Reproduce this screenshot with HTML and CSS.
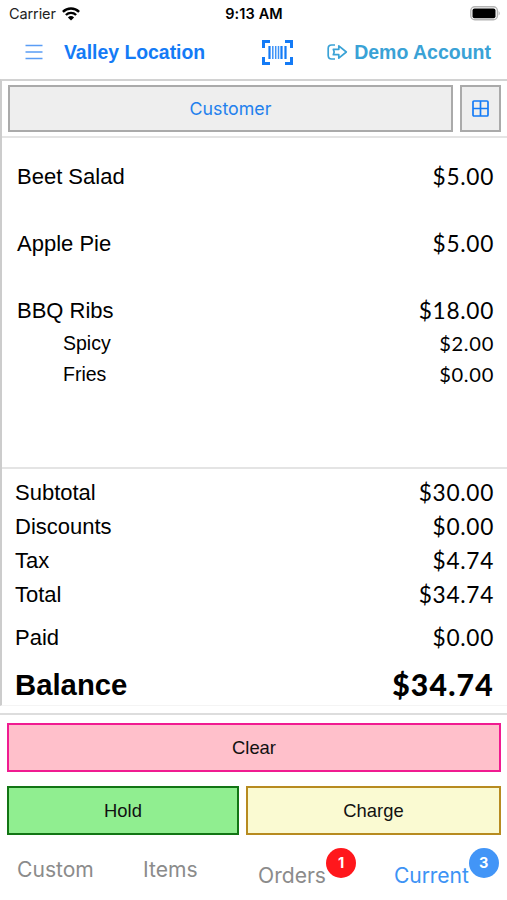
FILE: index.html
```html
<!DOCTYPE html>
<html lang="en">
<head>
<meta charset="utf-8">
<meta name="viewport" content="width=device-width">
<title>Current order</title>
<link rel="stylesheet" href="styles.css">
</head>
<body>
<div class="status">
  <div class="carrier">Carrier
    <svg width="18" height="14" viewBox="0 0 18 14"><g fill="none" stroke="#000" stroke-width="2.4"><path d="M.9 4.8a11.6 11.6 0 0 1 16.2 0"/><path d="M3.9 8a7.3 7.3 0 0 1 10.2 0"/></g><path d="M5.9 10.4a4.5 4.5 0 0 1 6.2 0L9 13.6z"/></svg>
  </div>
  <div class="clock">9:13 AM</div>
  <svg class="battery" width="31" height="15" viewBox="0 0 31 15"><rect x=".8" y=".8" width="26.6" height="13" rx="4" fill="#fff" stroke="#b4b4b4" stroke-width="1.4"/><rect x="2.5" y="2.5" width="23" height="9.7" rx="2"/><path d="M28.7 5q2 2.3 0 4.6z" fill="#aaa"/></svg>
</div>
<header class="header">
  <svg class="menu" width="18" height="16" viewBox="0 0 18 16"><path d="M.5 1.5h17M.5 8h17M.5 14.5h17" stroke="#5a9df5" stroke-width="1.7"/></svg>
  <div class="location">Valley Location</div>
  <svg class="barcode" width="31" height="25" viewBox="0 0 31 25"><path d="M1.5 8V1.5H8M23 1.5h6.5V8M29.5 17v6.5H23M8 23.5H1.5V17" fill="none" stroke="#147bf6" stroke-width="3"/><path d="M7.5 6v13M23.5 6v13M19.5 6v13" stroke="#147bf6" stroke-width="2.2"/><path d="M10.8 6v13M13.7 6v13M16.5 6v13" stroke="#3d93f8" stroke-width="1.5"/></svg>
  <div class="account">
    <svg width="21" height="16" viewBox="0 0 21 16"><path d="M8 1H4.6Q1.2 1 1.2 4.4v7.2Q1.2 15 4.6 15H8M6.3 5.3h5.500V1.8L19.3 8l-7.500 6.2v-3.500H6.3L7.2 8z" fill="none" stroke="#3aa2d6" stroke-width="1.7" stroke-linejoin="round"/></svg>
    <span>Demo Account</span>
  </div>
</header>
<main class="ticket">
  <div class="toolbar">
    <button class="customer">Customer</button>
    <button class="grid-button" aria-label="Tables"><svg width="17" height="17" viewBox="0 0 17 17"><path d="M8.5 1v15M1 8.5h15M2 1h13q1 0 1 1v13q0 1-1 1H2q-1 0-1-1V2q0-1 1-1z" fill="none" stroke="#147bf6" stroke-width="1.7"/></svg></button>
  </div>
  <section class="items">
    <div class="item"><span>Beet Salad</span><span class="price">$5.00</span></div>
    <div class="item"><span>Apple Pie</span><span class="price">$5.00</span></div>
    <div class="item"><span>BBQ Ribs</span><span class="price">$18.00</span></div>
    <div class="modifier"><span>Spicy</span><span class="price">$2.00</span></div>
    <div class="modifier"><span>Fries</span><span class="price">$0.00</span></div>
  </section>
  <section class="totals">
    <div class="total"><span>Subtotal</span><span class="price">$30.00</span></div>
    <div class="total"><span>Discounts</span><span class="price">$0.00</span></div>
    <div class="total"><span>Tax</span><span class="price">$4.74</span></div>
    <div class="total"><span>Total</span><span class="price">$34.74</span></div>
    <div class="total paid"><span>Paid</span><span class="price">$0.00</span></div>
    <div class="balance"><span>Balance</span><span class="price">$34.74</span></div>
  </section>
</main>
<section class="actions">
  <button class="action clear">Clear</button>
  <button class="action hold">Hold</button>
  <button class="action charge">Charge</button>
</section>
<nav class="tabs">
  <div class="tab custom">Custom</div>
  <div class="tab list">Items</div>
  <div class="tab orders">Orders<span class="badge red">1</span></div>
  <div class="tab current">Current<span class="badge blue">3</span></div>
</nav>
</body>
</html>
```
FILE: styles.css
```css
* { box-sizing: border-box; }
body { margin: 0; width: 507px; height: 900px; overflow: hidden; background: #fff; color: #000; font-family: "Liberation Sans", sans-serif; }
svg { display: block; flex: none; }
button { padding: 0; border-radius: 0; font: inherit; }
.status { display: grid; grid-template-columns: 1fr auto 1fr; align-items: center; height: 27px; padding: 0 6px 0 9px; font: 14.5px/18px Inter, sans-serif; }
.carrier { display: flex; align-items: center; gap: 6px; color: #222; letter-spacing: -.1px; }
.clock { padding-right: 2px; font-weight: 600; letter-spacing: .1px; }
.battery { justify-self: end; }
.header { display: flex; align-items: center; height: 52px; padding: 0 16px 2px 25px; font-weight: 700; }
.location { width: 198px; margin-left: 21px; font-size: 19.4px; color: #147bf6; white-space: nowrap; }
.account { display: flex; align-items: center; gap: 6px; margin-left: auto; font-size: 19.5px; color: #3aa2d6; white-space: nowrap; }
.ticket { height: 627px; border-top: 2px solid #d2d2d2; border-left: 2px solid #ccc; border-bottom: 1px solid #f4f4f4; }
.toolbar { display: grid; grid-template-columns: 445px 41px; gap: 7px; height: 57px; padding: 4px 6px 5px; border-bottom: 2px solid #e4e4e4; }
.customer, .grid-button { height: 47px; border: 2px solid #aaa; background: #eee; color: #2380ed; }
.customer { font: 17.8px Inter, sans-serif; }
.grid-button { display: flex; align-items: center; justify-content: center; }
.items { height: 331px; padding: 5px 13px 0 15px; border-bottom: 2px solid #e4e4e4; font-size: 22px; }
.item, .modifier, .total, .balance { display: flex; justify-content: space-between; align-items: center; }
.item { height: 67px; }
.item:nth-child(3) { height: 68px; }
.modifier { height: 31px; padding-left: 46px; font-size: 19.5px; }
.item + .modifier { margin-top: -17px; }
.price { padding-bottom: 1px; font-family: Lato, sans-serif; font-size: 1.03em; letter-spacing: .7px; }
.totals { padding: 7px 13px 0; font-size: 22px; }
.total { height: 34px; }
.paid { height: 52px; }
.balance { height: 42px; font-size: 29.3px; font-weight: 700; }
.balance .price { padding-bottom: 3px; font-weight: 900; letter-spacing: 1.2px; }
.actions { display: grid; grid-template-columns: 232px 255px; gap: 14px 7px; margin-top: 7px; padding: 8px 6px 0 7px; border-top: 2px solid #ddd; }
.action { height: 49px; border: 2px solid; color: #111; font-size: 18.4px; }
.clear { grid-column: 1 / 3; border-color: #f01b91; background: #ffc0cb; }
.hold { border-color: #127514; background: #90ee90; }
.charge { border-color: #b78b20; background: #fafad2; }
.tabs { display: flex; align-items: flex-start; padding: 12px 0 0 17px; color: #8b8b8b; font: 21.1px/46px Inter, sans-serif; }
.tab { flex: none; height: 46px; white-space: nowrap; }
.custom { width: 126px; }
.list { width: 115px; }
.orders, .current { display: flex; padding-top: 6px; }
.orders { width: 136px; }
.current { color: #3c93f5; letter-spacing: -.1px; }
.badge { width: 30px; height: 30px; margin-top: -5px; border-radius: 50%; color: #fff; font-size: 14.5px; font-weight: 700; line-height: 30px; text-align: center; }
.red { background: #ff171c; }
.blue { background: #4295f7; }
```
